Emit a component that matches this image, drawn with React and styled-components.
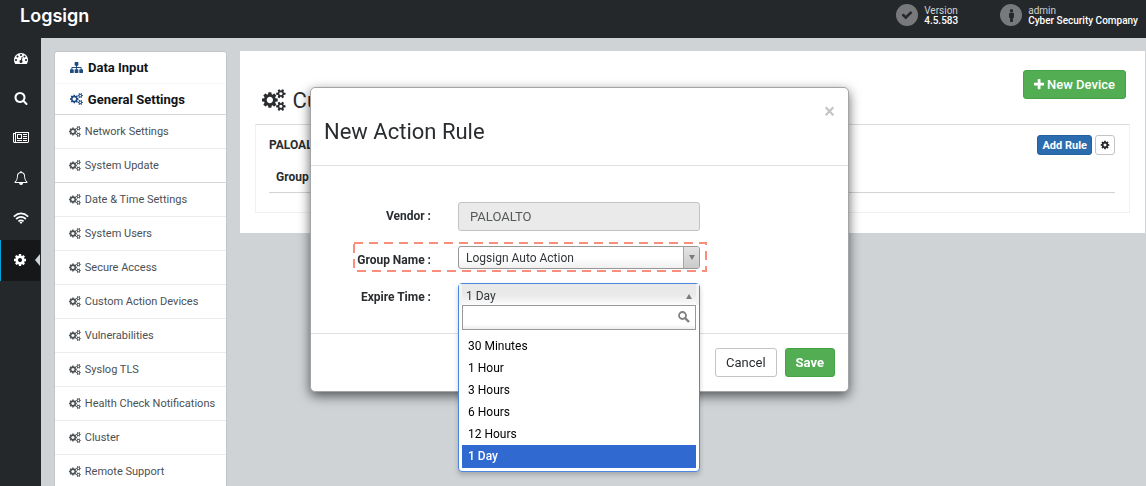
import React, { useState } from "react";
import styled, { createGlobalStyle, css } from "styled-components";
import { FaMale } from "react-icons/fa";

const GlobalStyle = createGlobalStyle`
  *, *::before, *::after { box-sizing: border-box; }
  body {
    margin: 0;
    background: #cfd3d6;
    color: #2a2d30;
    font-family: Roboto, "Liberation Sans", sans-serif;
    font-size: 12px;
  }
  button, input, select { font-family: inherit; margin: 0; }
  ul { list-style: none; margin: 0; padding: 0; }
  a { color: inherit; text-decoration: none; }
`;

const COGS =
  "M896 896q0-106-75-181t-181-75-181 75-75 181 75 181 181 75 181-75 75-181zm768 512q0-52-38-90t-90-38-90 38-38 90q0 53 37.5 90.5t90.5 37.5 90.5-37.5 37.5-90.5zm0-1024q0-52-38-90t-90-38-90 38-38 90q0 53 37.5 90.5t90.5 37.5 90.5-37.5 37.5-90.5zm-384 421v185q0 10-7 19.5t-16 10.5l-155 24q-11 35-32 76 34 48 90 115 7 11 7 20 0 12-7 19-23 30-82.5 89.5t-78.5 59.5q-11 0-21-7l-115-90q-37 19-77 31-11 108-23 155-7 24-30 24h-186q-11 0-20-7.5t-10-17.5l-23-153q-34-10-75-31l-118 89q-7 7-20 7-11 0-21-8-144-133-144-160 0-9 7-19 10-14 41-53t47-61q-23-44-35-82l-152-24q-10-1-17-9.5t-7-19.5v-185q0-10 7-19.5t16-10.5l155-24q11-35 32-76-34-48-90-115-7-11-7-20 0-12 7-20 22-30 82-89t79-59q11 0 21 7l115 90q34-18 77-32 11-108 23-154 7-24 30-24h186q11 0 20 7.5t10 17.5l23 153q34 10 75 31l118-89q8-7 20-7 11 0 21 8 144 133 144 160 0 8-7 19-12 16-42 54t-45 60q23 48 34 82l152 23q10 2 17 10.5t7 19.5zm640 533v140q0 16-149 31-12 27-30 52 51 113 51 138 0 4-4 7-122 71-124 71-8 0-46-47t-52-68q-20 2-30 2t-30-2q-14 21-52 68t-46 47q-2 0-124-71-4-3-4-7 0-25 51-138-18-25-30-52-149-15-149-31v-140q0-16 149-31 13-29 30-52-51-113-51-138 0-4 4-7 4-2 35-20t59-34 30-16q8 0 46 46.5t52 67.5q20-2 30-2t30 2q51-71 92-112l6-2q4 0 124 70 4 3 4 7 0 25-51 138 17 23 30 52 149 15 149 31zm0-1024v140q0 16-149 31-12 27-30 52 51 113 51 138 0 4-4 7-122 71-124 71-8 0-46-47t-52-68q-20 2-30 2t-30-2q-14 21-52 68t-46 47q-2 0-124-71-4-3-4-7 0-25 51-138-18-25-30-52-149-15-149-31v-140q0-16 149-31 13-29 30-52-51-113-51-138 0-4 4-7 4-2 35-20t59-34 30-16q8 0 46 46.5t52 67.5q20-2 30-2t30 2q51-71 92-112l6-2q4 0 124 70 4 3 4 7 0 25-51 138 17 23 30 52 149 15 149 31z";

const ICONS = {
  cogs: { w: 1920, d: COGS },
  cog: {
    w: 1792,
    d: "M1152 896q0-106-75-181t-181-75-181 75-75 181 75 181 181 75 181-75 75-181zm512-109v222q0 12-8 23t-20 13l-185 28q-19 54-39 91 35 50 107 138 10 12 10 25t-9 23q-27 37-99 108t-94 71q-12 0-26-9l-138-108q-44 23-91 38-16 136-29 186-7 28-36 28h-222q-14 0-24.5-8.5t-11.5-21.5l-28-184q-49-16-90-37l-141 107q-10 9-25 9-14 0-25-11-126-114-165-168-7-10-7-23 0-12 8-23 15-21 51-66.5t54-70.5q-27-50-41-99l-183-27q-13-2-21-12.5t-8-23.5v-222q0-12 8-23t19-13l186-28q14-46 39-92-40-57-107-138-10-12-10-24 0-10 9-23 26-36 98.5-107.5t94.5-71.5q13 0 26 10l138 107q44-23 91-38 16-136 29-186 7-28 36-28h222q14 0 24.5 8.5t11.5 21.5l28 184q49 16 90 37l142-107q9-9 24-9 13 0 25 10 129 119 165 170 7 8 7 22 0 12-8 23-15 21-51 66.5t-54 70.5q26 50 41 98l183 28q13 2 21 12.5t8 23.5z",
  },
  search: {
    w: 1792,
    d: "M1216 832q0-185-131.5-316.5t-316.5-131.5-316.5 131.5-131.5 316.5 131.5 316.5 316.5 131.5 316.5-131.5 131.5-316.5zm512 832q0 52-38 90t-90 38q-54 0-90-38l-343-342q-179 124-399 124-143 0-273.5-55.5t-225-150-150-225-55.5-273.5 55.5-273.5 150-225 225-150 273.5-55.5 273.5 55.5 225 150 150 225 55.5 273.5q0 220-124 399l343 343q37 37 37 90z",
  },
  newspaper: {
    w: 2048,
    d: "M1024 512h-384v384h384v-384zm128 640v128h-640v-128h640zm0-768v640h-640v-640h640zm640 768v128h-512v-128h512zm0-256v128h-512v-128h512zm0-256v128h-512v-128h512zm0-256v128h-512v-128h512zm-1536 960v-960h-128v960q0 26 19 45t45 19 45-19 19-45zm1664 0v-1088h-1536v1088q0 33-11 64h1483q26 0 45-19t19-45zm128-1216v1216q0 80-56 136t-136 56h-1664q-80 0-136-56t-56-136v-1088h256v-128h1792z",
  },
  bell: {
    w: 1792,
    d: "M912 1696q0-16-16-16-59 0-101.5-42.5t-42.5-101.5q0-16-16-16t-16 16q0 73 51.5 124.5t124.5 51.5q16 0 16-16zm-666-288h1300q-266-300-266-832 0-51-24-105t-69-103-121.5-80.5-169.5-31.5-169.5 31.5-121.5 80.5-69 103-24 105q0 532-266 832zm1482 0q0 52-38 90t-90 38h-448q0 106-75 181t-181 75-181-75-75-181h-448q-52 0-90-38t-38-90q50-42 91-88t85-119.5 74.5-158.5 50-206 19.5-260q0-152 117-282.5t307-158.5q-8-19-8-39 0-40 28-68t68-28 68 28 28 68q0 20-8 39 190 28 307 158.5t117 282.5q0 139 19.5 260t50 206 74.5 158.5 85 119.5 91 88z",
  },
  dashboard: {
    w: 1792,
    d: "M384 1152q0-53-37.5-90.5t-90.5-37.5-90.5 37.5-37.5 90.5 37.5 90.5 90.5 37.5 90.5-37.5 37.5-90.5zm192-448q0-53-37.5-90.5t-90.5-37.5-90.5 37.5-37.5 90.5 37.5 90.5 90.5 37.5 90.5-37.5 37.5-90.5zm428 481l101-382q6-26-7.5-48.5t-38.5-29.5-48 6.5-30 39.5l-101 382q-60 5-107 43.5t-63 98.5q-20 77 20 146t117 89 146-20 89-117q16-60-6-117t-72-91zm660-33q0-53-37.5-90.5t-90.5-37.5-90.5 37.5-37.5 90.5 37.5 90.5 90.5 37.5 90.5-37.5 37.5-90.5zm-640-640q0-53-37.5-90.5t-90.5-37.5-90.5 37.5-37.5 90.5 37.5 90.5 90.5 37.5 90.5-37.5 37.5-90.5zm448 192q0-53-37.5-90.5t-90.5-37.5-90.5 37.5-37.5 90.5 37.5 90.5 90.5 37.5 90.5-37.5 37.5-90.5zm320 448q0 261-141 483-19 29-54 29h-1402q-35 0-54-29-141-221-141-483 0-182 71-348t191-286 286-191 348-71 348 71 286 191 191 286 71 348z",
  },
  sitemap: {
    w: 1792,
    d: "M1792 1248v320q0 40-28 68t-68 28h-320q-40 0-68-28t-28-68v-320q0-40 28-68t68-28h96v-192h-512v192h96q40 0 68 28t28 68v320q0 40-28 68t-68 28h-320q-40 0-68-28t-28-68v-320q0-40 28-68t68-28h96v-192h-512v192h96q40 0 68 28t28 68v320q0 40-28 68t-68 28h-320q-40 0-68-28t-28-68v-320q0-40 28-68t68-28h96v-192q0-52 38-90t90-38h512v-192h-96q-40 0-68-28t-28-68v-320q0-40 28-68t68-28h320q40 0 68 28t28 68v320q0 40-28 68t-68 28h-96v192h512q52 0 90 38t38 90v192h96q40 0 68 28t28 68z",
  },
  check: {
    w: 1792,
    d: "M1671 566q0 40-28 68l-724 724-136 136q-28 28-68 28t-68-28l-136-136-362-362q-28-28-28-68t28-68l136-136q28-28 68-28t68 28l294 295 656-657q28-28 68-28t68 28l136 136q28 28 28 68z",
  },
  plus: {
    w: 1408,
    x: 192,
    d: "M1600 736v192q0 40-28 68t-68 28h-416v416q0 40-28 68t-68 28h-192q-40 0-68-28t-28-68v-416h-416q-40 0-68-28t-28-68v-192q0-40 28-68t68-28h416v-416q0-40 28-68t68-28h192q40 0 68 28t28 68v416h416q40 0 68 28t28 68z",
  },
};

const Svg = styled.svg`
  display: block;
  flex: none;
  height: ${(p) => p.$size}px;
  fill: currentColor;
`;

function Icon({ name, size }) {
  const icon = ICONS[name];
  return (
    <Svg $size={size} viewBox={`${icon.x || 0} 0 ${icon.w} 1792`} aria-hidden="true">
      <path d={icon.d} />
    </Svg>
  );
}

function WifiIcon() {
  return (
    <Svg $size={12} viewBox="0 0 16 12" aria-hidden="true">
      <g fill="none" stroke="currentColor" strokeWidth="1.7">
        <path d="M0.8 4.6Q8 -1.8 15.2 4.6" />
        <path d="M3.1 7Q8 2.9 12.9 7" />
        <path d="M5.4 9.3Q8 7.3 10.6 9.3" />
      </g>
      <path d="M6.5 10.3Q8 9.3 9.5 10.3L8 11.9z" />
    </Svg>
  );
}

const Shell = styled.div`
  display: flex;
  flex-direction: column;
  height: 100vh;
  overflow: hidden;
`;

const TopBar = styled.header`
  display: flex;
  flex: none;
  align-items: flex-start;
  height: 38px;
  padding: 4px 8px 0 20px;
  background: #24282b;
  color: #fff;
`;

const Logo = styled.a`
  margin-right: auto;
  font-family: Inter, sans-serif;
  font-size: 18px;
  font-weight: 600;
  line-height: 24px;
`;

const Status = styled.div`
  display: flex;
  gap: 6px;
  margin-left: 42px;
`;

const Badge = styled.span`
  display: flex;
  align-items: center;
  justify-content: center;
  width: 22px;
  height: 22px;
  border-radius: 50%;
  background: #77797b;
  color: #24282b;
`;

const StatusText = styled.span`
  display: flex;
  flex-direction: column;
  padding-top: 2px;
  color: #d0d1d2;
  font-size: 10px;
  line-height: 10px;
  strong { color: #fff; font-weight: 500; }
`;

const Body = styled.div`
  display: flex;
  flex: 1;
  min-height: 0;
`;

const Rail = styled.nav`
  flex: none;
  width: 41px;
  background: #24282b;
`;

const RailLink = styled.a`
  display: flex;
  align-items: center;
  justify-content: center;
  height: 40px;
  color: #fff;
  ${(p) =>
    p.$active &&
    css`
      position: relative;
      height: 41px;
      margin: 2px 1px 0 0;
      padding: 0 2px 2px 0;
      border-left: 1px solid #00a3e0;
      background: #151719;
      &::after {
        content: "";
        position: absolute;
        right: 0;
        border: 6px solid transparent;
        border-left: 0;
        border-right: 5px solid #cfd3d6;
      }
    `}
`;

const Content = styled.div`
  display: flex;
  flex: 1;
  align-items: flex-start;
  gap: 13px;
  min-width: 0;
  padding: 13px 1px 0 13px;
`;

const Side = styled.nav`
  flex: none;
  width: 173px;
  border: 1px solid #c3c6c8;
  border-radius: 3px 3px 0 0;
  background: #fff;
`;

const SideHeading = styled.a`
  display: flex;
  align-items: center;
  gap: 5px;
  height: 31px;
  padding-left: 15px;
  color: #1d4a80;
  font-size: 13px;
  font-weight: 700;
  span { color: #111417; }
  & + & { border-top: 1px solid #f7f7f7; }
`;

const SideGroup = styled.ul`
  border-top: 1px solid #d4d6d7;
  & + & { border-top: 0; }
`;

const SideItem = styled.li`
  height: 34px;
  border-bottom: 1px solid #ececec;
  &:last-child { border-bottom-color: #d4d6d7; }
  a {
    display: flex;
    align-items: center;
    gap: 4px;
    height: 33px;
    padding-left: 14px;
    color: #4b5054;
    font-size: 11px;
  }
`;

const Panel = styled.main`
  flex: 1;
  min-width: 0;
  padding: 19px 15px 20px;
  background: #fff;
`;

const PanelHeader = styled.div`
  display: flex;
  justify-content: space-between;
  height: 54px;
  padding: 0 4px 0 7px;
`;

const PanelTitle = styled.h1`
  display: flex;
  align-items: center;
  gap: 7px;
  height: 60px;
  margin: 0;
  font-size: 22px;
  font-weight: 400;
`;

const Button = styled.button`
  display: inline-flex;
  align-items: center;
  justify-content: center;
  gap: 3px;
  height: 29px;
  padding: 0 10px;
  border: 1px solid #c4c4c4;
  border-radius: 3px;
  background: #fff;
  color: #2a2d30;
  font-size: 13px;
  ${(p) =>
    p.$kind === "success" &&
    css`
      border-color: #45a245;
      background: #53ae53;
      color: #fff;
      font-weight: 700;
    `}
  ${(p) =>
    p.$kind === "primary" &&
    css`
      border-color: #245f9e;
      background: #2a6cae;
      color: #fff;
      font-weight: 700;
    `}
  ${(p) =>
    p.$small &&
    css`
      height: 20px;
      padding: 0 4px;
      font-size: 11px;
    `}
`;

const NewDevice = styled(Button)`
  font-weight: 500;
`;

const Device = styled.section`
  height: 89px;
  padding: 10px 14px 10px 13px;
  border: 1px solid #f1f1f1;
  border-top-color: #dadbdc;
`;

const DeviceHeader = styled.div`
  display: flex;
  align-items: center;
  gap: 3px;
  h2 {
    flex: 1;
    margin: 0;
    font-size: 12px;
    font-weight: 700;
  }
`;

const DeviceTable = styled.table`
  width: 100%;
  border-collapse: collapse;
  th {
    height: 37px;
    padding: 7px 7px 0;
    border-bottom: 1px solid #d2d3d4;
    font-size: 12px;
    font-weight: 700;
    text-align: left;
  }
`;

const Overlay = styled.div`
  position: fixed;
  inset: 87px 0 auto 13px;
  display: flex;
  justify-content: center;
`;

const Dialog = styled.section`
  width: 539px;
  border: 1px solid #a3a4a5;
  border-radius: 5px;
  background: #fff;
  box-shadow: 0 4px 12px rgba(0, 0, 0, 0.6);
`;

const DialogHeader = styled.div`
  display: flex;
  align-items: flex-start;
  justify-content: space-between;
  height: 78px;
  padding: 13px 13px 0;
  border-bottom: 1px solid #dedfe0;
  h2 {
    margin: 0;
    padding-top: 17px;
    font-size: 22px;
    font-weight: 400;
    line-height: 28px;
  }
`;

const Close = styled.button`
  padding: 0;
  border: 0;
  background: none;
  color: #c3c3c3;
  font-size: 20px;
  font-weight: 500;
  line-height: 20px;
`;

const Form = styled.form`
  display: flex;
  flex-direction: column;
  gap: 12px;
  height: 167px;
  padding: 36px 142px 0 43px;
`;

const Row = styled.div`
  position: relative;
  display: flex;
  align-items: flex-start;
  gap: 27px;
  padding: 0 6px 0 3px;
  ${(p) => p.$marked && css`height: 28px; padding-top: 3px;`}
  label {
    width: 74px;
    font-weight: 700;
    line-height: 28px;
    text-align: right;
    white-space: nowrap;
  }
`;

const Dashes = styled.svg`
  position: absolute;
  inset: 0;
  width: 100%;
  height: 100%;
  overflow: visible;
  pointer-events: none;
`;

const Field = styled.div`
  position: relative;
  flex: 1;
  min-width: 0;
`;

const TextInput = styled.input`
  display: block;
  width: 100%;
  height: 29px;
  padding: 0 11px;
  border: 1px solid #c2c2c2;
  border-radius: 3px;
  background: #eaeaea;
  color: #55585a;
  font-size: 13px;
`;

const Select = styled.select`
  display: block;
  width: 100%;
  height: 23px;
  padding: 0 7px;
  border: 1px solid #989898;
  border-radius: 3px;
  background: linear-gradient(#fff 50%, #f0f0f0);
  color: #33373a;
  font-size: 12px;
  appearance: none;
`;

const ArrowCell = styled.span`
  position: absolute;
  inset: 1px 1px 1px auto;
  display: flex;
  align-items: center;
  justify-content: center;
  width: 16px;
  border-left: 1px solid #a5a5a5;
  border-radius: 0 2px 2px 0;
  background: linear-gradient(#e4e4e4, #cacaca);
  pointer-events: none;
`;

const Arrow = styled.i`
  border: 3px solid transparent;
  ${(p) =>
    p.$up
      ? css`border-top: 0; border-bottom: 5px solid #7b7b7b;`
      : css`border-bottom: 0; border-top: 5px solid #7b7b7b;`}
`;

const Combo = styled.div`
  position: absolute;
  top: 0;
  left: 0;
  right: 0;
  height: 189px;
  padding: 0 3px;
  border: 1px solid #4a86e0;
  border-radius: 4px;
  background: #fff;
  box-shadow: 0 3px 5px rgba(0, 0, 0, 0.2);
`;

const ComboButton = styled.button`
  display: flex;
  align-items: center;
  justify-content: space-between;
  width: 100%;
  height: 21px;
  padding: 3px 4px 0;
  border: 0;
  background: linear-gradient(#e9e9e9 50%, #fcfcfc);
  box-shadow: -3px 0 #f3f3f3, 3px 0 #f3f3f3;
  color: #33373a;
  font-size: 12px;
`;

const SearchBox = styled.div`
  display: flex;
  align-items: center;
  height: 25px;
  padding: 0 5px 2px 0;
  border: 1px solid #999;
  background: linear-gradient(#fff 80%, #eee);
  color: #808080;
  input {
    flex: 1;
    min-width: 0;
    padding: 0 5px;
    border: 0;
    outline: 0;
    background: none;
  }
`;

const Options = styled.ul`
  padding-top: 5px;
`;

const Option = styled.li`
  height: ${(p) => (p.$selected ? 23 : 22)}px;
  padding-left: 6px;
  background: ${(p) => (p.$selected ? "#3069d0" : "transparent")};
  color: ${(p) => (p.$selected ? "#fff" : "#000")};
  font-weight: ${(p) => (p.$selected ? 500 : 400)};
  line-height: 22px;
`;

const DialogFooter = styled.div`
  display: flex;
  justify-content: flex-end;
  gap: 8px;
  padding: 14px 13px;
  border-top: 1px solid #dedfe0;
`;

const GROUPS = [
  ["Network Settings", "System Update"],
  [
    "Date & Time Settings",
    "System Users",
    "Secure Access",
    "Custom Action Devices",
    "Vulnerabilities",
    "Syslog TLS",
    "Health Check Notifications",
    "Cluster",
    "Remote Support",
  ],
];

const TIMES = ["30 Minutes", "1 Hour", "3 Hours", "6 Hours", "12 Hours", "1 Day"];

export default function App() {
  const [time, setTime] = useState("1 Day");
  return (
    <>
      <GlobalStyle />
      <Shell>
        <TopBar>
          <Logo href="#">Logsign</Logo>
          <Status>
            <Badge><Icon name="check" size={12} /></Badge>
            <StatusText>Version<strong>4.5.583</strong></StatusText>
          </Status>
          <Status>
            <Badge><FaMale size={13} /></Badge>
            <StatusText>admin<strong>Cyber Security Company</strong></StatusText>
          </Status>
        </TopBar>
        <Body>
          <Rail>
            <RailLink href="#" aria-label="Dashboard"><Icon name="dashboard" size={14} /></RailLink>
            <RailLink href="#" aria-label="Search"><Icon name="search" size={14} /></RailLink>
            <RailLink href="#" aria-label="Reports"><Icon name="newspaper" size={14} /></RailLink>
            <RailLink href="#" aria-label="Alerts"><Icon name="bell" size={14} /></RailLink>
            <RailLink href="#" aria-label="Network"><WifiIcon /></RailLink>
            <RailLink href="#" aria-label="Settings" $active><Icon name="cog" size={14} /></RailLink>
          </Rail>
          <Content>
            <Side>
              <SideHeading href="#"><Icon name="sitemap" size={13} /><span>Data Input</span></SideHeading>
              <SideHeading href="#"><Icon name="cogs" size={12} /><span>General Settings</span></SideHeading>
              {GROUPS.map((items) => (
                <SideGroup key={items[0]}>
                  {items.map((item) => (
                    <SideItem key={item}>
                      <a href="#"><Icon name="cogs" size={11} />{item}</a>
                    </SideItem>
                  ))}
                </SideGroup>
              ))}
            </Side>
            <Panel>
              <PanelHeader>
                <PanelTitle><Icon name="cogs" size={22} />Custom Action Devices</PanelTitle>
                <NewDevice $kind="success"><Icon name="plus" size={13} />New Device</NewDevice>
              </PanelHeader>
              <Device>
                <DeviceHeader>
                  <h2>PALOALTO</h2>
                  <Button $kind="primary" $small>Add Rule</Button>
                  <Button $small aria-label="Device settings"><Icon name="cog" size={10} /></Button>
                </DeviceHeader>
                <DeviceTable>
                  <thead><tr><th>Group Name</th></tr></thead>
                </DeviceTable>
              </Device>
            </Panel>
          </Content>
        </Body>
      </Shell>
      <Overlay>
        <Dialog role="dialog" aria-labelledby="dialog-title">
          <DialogHeader>
            <h2 id="dialog-title">New Action Rule</h2>
            <Close aria-label="Close">×</Close>
          </DialogHeader>
          <Form>
            <Row>
              <label htmlFor="vendor">Vendor :</label>
              <Field><TextInput id="vendor" value="PALOALTO" readOnly /></Field>
            </Row>
            <Row $marked>
              <Dashes aria-hidden="true">
                <rect width="100%" height="100%" fill="none" stroke="#fb8d7c" strokeWidth="2" strokeDasharray="9 6" />
              </Dashes>
              <label htmlFor="group">Group Name :</label>
              <Field>
                <Select id="group"><option>Logsign Auto Action</option></Select>
                <ArrowCell><Arrow /></ArrowCell>
              </Field>
            </Row>
            <Row>
              <label htmlFor="expire">Expire Time :</label>
              <Field>
                <Combo>
                  <ComboButton id="expire" type="button" aria-haspopup="listbox" aria-expanded="true">
                    {time}<Arrow $up />
                  </ComboButton>
                  <SearchBox>
                    <input type="text" aria-label="Search expire times" />
                    <Svg $size={12} viewBox="0 0 12 12" aria-hidden="true">
                      <circle cx="4.5" cy="4.5" r="3.5" fill="none" stroke="currentColor" strokeWidth="1.8" />
                      <path d="M7 7L11 11" stroke="currentColor" strokeWidth="2.4" />
                    </Svg>
                  </SearchBox>
                  <Options role="listbox" aria-label="Expire Time">
                    {TIMES.map((t) => (
                      <Option key={t} role="option" aria-selected={t === time} $selected={t === time} onClick={() => setTime(t)}>
                        {t}
                      </Option>
                    ))}
                  </Options>
                </Combo>
              </Field>
            </Row>
          </Form>
          <DialogFooter>
            <Button>Cancel</Button>
            <Button $kind="success">Save</Button>
          </DialogFooter>
        </Dialog>
      </Overlay>
    </>
  );
}
